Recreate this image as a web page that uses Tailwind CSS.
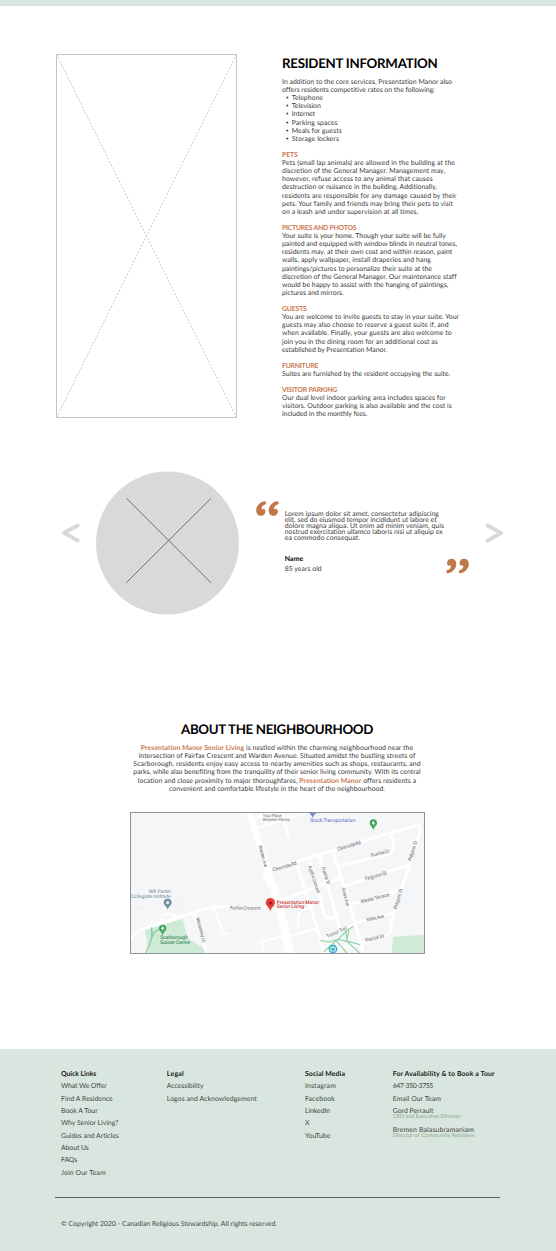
<!DOCTYPE html>
<html lang="en">
<head>
<meta charset="utf-8">
<title>Presentation Manor</title>
<script src="https://cdn.jsdelivr.net/npm/@tailwindcss/browser@4"></script>
</head>
<body class="bg-white font-[Lato,'Open_Sans',sans-serif] text-[#3c3c3c] [text-rendering:geometricPrecision]">
<div class="flex h-[1251px] w-[556px] flex-col overflow-hidden">
  <div class="h-1.5 shrink-0 bg-[#d9e6df]"></div>

  <section class="flex h-[412px] shrink-0 pl-14 pt-12">
    <svg class="h-[364px] w-[181px] shrink-0" viewBox="0 0 181 364" fill="none">
      <path d="M.5 .5 180.5 363.5M180.5 .5 .5 363.5" stroke="#b9bcbf" stroke-width=".8" stroke-dasharray="2 1.6"/>
      <rect x=".5" y=".5" width="180" height="363" stroke="#c2c5c9"/>
    </svg>
    <div class="ml-[45px] text-[6.9px] leading-[8.11px]">
      <h1 class="mb-[7px] mt-px text-[13.3px] font-bold leading-4 text-black"><span data-w="155.5">RESIDENT INFORMATION</span></h1>
      <p><span data-w="170">In addition to the core services, Presentation Manor also</span><br><span data-w="153">offers residents competitive rates on the following:</span></p>
      <ul>
        <li class="flex"><span class="w-[9.7px] pl-[3.7px] text-[5px]">•</span><span data-w="31.3">Telephone</span></li>
        <li class="flex"><span class="w-[9.7px] pl-[3.7px] text-[5px]">•</span><span data-w="29">Television</span></li>
        <li class="flex"><span class="w-[9.7px] pl-[3.7px] text-[5px]">•</span><span data-w="23.3">Internet</span></li>
        <li class="flex"><span class="w-[9.7px] pl-[3.7px] text-[5px]">•</span><span data-w="46">Parking spaces</span></li>
        <li class="flex"><span class="w-[9.7px] pl-[3.7px] text-[5px]">•</span><span data-w="50">Meals for guests</span></li>
        <li class="flex"><span class="w-[9.7px] pl-[3.7px] text-[5px]">•</span><span data-w="47.3">Storage lockers</span></li>
      </ul>
      <h2 class="mt-[8.11px] font-bold text-[#c87850]"><span data-w="15.7">PETS</span></h2>
      <p><span data-w="173">Pets (small lap animals) are allowed in the building at the</span><br><span data-w="163">discretion of the General Manager. Management may,</span><br><span data-w="150.7">however, refuse access to any animal that causes</span><br><span data-w="154.7">destruction or nuisance in the building. Additionally,</span><br><span data-w="174.7">residents are responsible for any damage caused by their</span><br><span data-w="171">pets. Your family and friends may bring their pets to visit</span><br><span data-w="136.3">on a leash and under supervision at all times.</span></p>
      <h2 class="mt-[8.11px] font-bold text-[#c87850]"><span data-w="74.3">PICTURES AND PHOTOS</span></h2>
      <p><span data-w="163.7">Your suite is your home. Though your suite will be fully</span><br><span data-w="175">painted and equipped with window blinds in neutral tones,</span><br><span data-w="170.3">residents may, at their own cost and within reason, paint</span><br><span data-w="149">walls, apply wallpaper, install draperies and hang</span><br><span data-w="150">paintings/pictures to personalize their suite at the</span><br><span data-w="174.7">discretion of the General Manager. Our maintenance staff</span><br><span data-w="166.3">would be happy to assist with the hanging of paintings,</span><br><span data-w="61.7">pictures and mirrors.</span></p>
      <h2 class="mt-[8.11px] font-bold text-[#c87850]"><span data-w="24.7">GUESTS</span></h2>
      <p><span data-w="177">You are welcome to invite guests to stay in your suite. Your</span><br><span data-w="166.7">guests may also choose to reserve a guest suite if, and</span><br><span data-w="169.7">when available. Finally, your guests are also welcome to</span><br><span data-w="155.7">join you in the dining room for an additional cost as</span><br><span data-w="105.3">established by Presentation Manor.</span></p>
      <h2 class="mt-[8.11px] font-bold text-[#c87850]"><span data-w="36.3">FURNITURE</span></h2>
      <p><span data-w="168.3">Suites are furnished by the resident occupying the suite.</span></p>
      <h2 class="mt-[8.11px] font-bold text-[#c87850]"><span data-w="55">VISITOR PARKING</span></h2>
      <p><span data-w="163.7">Our dual level indoor parking area includes spaces for</span><br><span data-w="169.7">visitors. Outdoor parking is also available and the cost is</span><br><span data-w="85.3">included in the monthly fees.</span></p>
    </div>
  </section>

  <section class="mt-[53px] flex h-[144px] shrink-0 items-start pl-[61px]">
    <svg class="mt-[51px] h-[22px] w-5 shrink-0" viewBox="0 0 20 22" fill="none" stroke="#d9d9d9" stroke-width="3.8" stroke-linecap="round" stroke-linejoin="round"><path d="M16.8 3.5 3 10.8 16.8 18.5"/></svg>
    <svg class="ml-[15px] h-[144px] w-[143px] shrink-0" viewBox="0 0 143 144" fill="none"><circle cx="71.5" cy="72" r="71.5" fill="#d9d9d9"/><path d="M30.5 27.3 115 111.7M115 27.3 30.3 111.7" stroke="#555" stroke-width=".8"/></svg>
    <svg class="ml-[17px] mt-[30px] h-[16px] w-[23px] shrink-0" viewBox="0 0 23 16" fill="#c27748"><path id="q" d="M9.2 .4C5.800 0 .2 3.900 .2 9.500 .2 12.900 2.300 14.800 5 14.800 7.700 14.800 9.400 13 9.400 10.600 9.400 9.100 8.900 8.200 7.900 7.700 7.500 8.100 6.700 8.400 5.900 8.200 5.200 6.300 6.500 4.200 9.200 3.500 10.400 3.100 10.400 .7 9.200 .4Z"/><use href="#q" x="12.5"/></svg>
    <div class="ml-[5.7px] mt-[39.5px] w-[161px] shrink-0 text-[6.9px] leading-[6.2px]">
      <p><span data-w="154.3">Lorem ipsum dolor sit amet, consectetur adipiscing</span><br><span data-w="152">elit, sed do eiusmod tempor incididunt ut labore et</span><br><span data-w="159.3">dolore magna aliqua. Ut enim ad minim veniam, quis</span><br><span data-w="158">nostrud exercitation ullamco laboris nisi ut aliquip ex</span><br><span data-w="75.3">ea commodo consequat.</span></p>
      <p class="mt-[12.3px] leading-[10.3px]"><b class="text-black"><span data-w="18.7">Name</span></b><br><span data-w="37">85 years old</span></p>
    </div>
    <svg class="mt-[87px] h-[16px] w-[23px] shrink-0" viewBox="0 0 23 16" fill="#c27748"><g transform="rotate(180 11.5 7.8)"><use href="#q"/><use href="#q" x="12.5"/></g></svg>
    <svg class="ml-[15px] mt-[51px] h-[22px] w-5 shrink-0" viewBox="0 0 20 22" fill="none" stroke="#d9d9d9" stroke-width="3.8" stroke-linecap="round" stroke-linejoin="round"><path d="M3.5 3.5 17.2 11 3.5 18.7"/></svg>
  </section>

  <section class="mt-[106px] flex shrink-0 flex-col items-center pr-[2px] text-center text-[6.9px] leading-[8.1px]">
    <h1 class="mb-[7.2px] text-[13.3px] font-bold leading-4 text-black"><span data-w="192">ABOUT THE NEIGHBOURHOOD</span></h1>
    <p><span data-w="272.3"><b class="text-[#c87850]">Presentation Manor Senior Living</b> is nestled within the charming neighbourhood near the</span><br><span data-w="276.7">intersection of Fairfax Crescent and Warden Avenue. Situated amidst the bustling streets of</span><br><span data-w="287.3">Scarborough, residents enjoy easy access to nearby amenities such as shops, restaurants, and</span><br><span data-w="287.3">parks, while also benefiting from the tranquility of their senior living community. With its central</span><br><span data-w="278.3">location and close proximity to major thoroughfares, <b class="text-[#c87850]">Presentation Manor</b> offers residents a</span><br><span data-w="216">convenient and comfortable lifestyle in the heart of the neighbourhood.</span></p>
  </section>

  <svg class="ml-[130px] mt-[19.2px] h-[142px] w-[295px] shrink-0" viewBox="15 20 885 426" fill="none" font-family="Roboto, sans-serif" font-size="15">
    <rect x="15" y="20" width="885" height="426" fill="#f5f6f8"/>
    <path d="M60 374 172 341 190 400 240 431V446H72Z" fill="#d0ead8"/>
    <path d="M804 394 900 388V446H800Z" fill="#d0ead8"/>
    <g stroke="#fff" stroke-linecap="round" stroke-linejoin="round">
      <path d="M370 10 402 110 443 240 466 320 500 450" stroke-width="19"/>
      <path d="M425 210 446 245 476 360 494 440" stroke-width="26"/>
      <path d="M10 420Q22 385 48 372L150 340 232 313Q280 300 330 305L405 310 436 297 560 250 640 220" stroke-width="9"/>
      <path d="M433 196 520 167 880 58Q888 62 882 88L840 220 806 322 795 380Q790 392 770 396L580 446" stroke-width="9"/>
      <path d="M513 168 588 405 598 450M552 158 600 335 618 339 637 333M582 150 645 370M624 139 690 350 714 440M643 182 790 147Q808 140 806 112L800 92M658 242 850 180M674 298 822 255M690 354 808 322M588 408 690 354M712 412 760 399" stroke-width="9"/>
      <path d="M396 68 600 5M472 20 491 97M385 38 470 12M410 25 423 58" stroke-width="7"/>
      <path d="M208 326 220 370 237 414 243 446M270 314 290 375Q296 390 310 384M400 412 465 394M410 414 420 446M108 345Q108 324 132 325 154 327 156 338M520 365 519 330Q528 314 560 305M470 399 570 370" stroke-width="6"/>
    </g>
    <path d="M15 312 60 304M145 289 172 278M152 305 178 294M850 150 890 162M398 50 404 60 420 53" stroke="#e9ebee" stroke-width="2"/>
    <path d="M110 366 86 382 73 419 61 446M80 398V366" stroke="#8acb9d" stroke-width="4"/>
    <path d="M586 405 612 410 640 402 680 411 706 418M596 440 635 405 668 374 685 363M662 376 667 409 706 445M633 405 668 446M672 371 665 410" stroke="#92d4a6" stroke-width="3.5"/>
    <g fill="#66686b" stroke="#f8f9fa" stroke-width="2" paint-order="stroke">
      <g text-anchor="middle">
        <text transform="translate(409 154) rotate(75)" textLength="67" lengthAdjust="spacingAndGlyphs">Warden Ave</text>
        <text transform="translate(361 313) rotate(1)" textLength="92">Fairfax Crescent</text>
        <text transform="translate(223 375) rotate(75)" textLength="77" lengthAdjust="spacingAndGlyphs">Monastery Ln</text>
        <text transform="translate(480 188) rotate(-16)" textLength="75">Cleanside Rd</text>
        <text transform="translate(673 126) rotate(-16)" textLength="73">Cleanside Rd</text>
        <text transform="translate(767 148) rotate(-14)" textLength="57">Fuarfax Dr</text>
        <text transform="translate(754 216) rotate(-15)" textLength="67">Ferguson St</text>
        <text transform="translate(751 283) rotate(-14)" textLength="88">Wexler Terrace</text>
        <text transform="translate(751 343) rotate(-12)" textLength="56">Yates Ave</text>
        <text transform="translate(750 403) rotate(-14)" textLength="57">Patrick St</text>
        <text transform="translate(637 385) rotate(-25)" textLength="66">Trainor Trail</text>
        <text transform="translate(563 224) rotate(72)" textLength="85" lengthAdjust="spacingAndGlyphs">Agatha Crescent</text>
        <text transform="translate(598 212) rotate(72)" textLength="54" lengthAdjust="spacingAndGlyphs">Dunlop St</text>
        <text transform="translate(657 275) rotate(76)" textLength="57" lengthAdjust="spacingAndGlyphs">Alvara Ave</text>
        <text transform="translate(868 138) rotate(-72)" textLength="62" lengthAdjust="spacingAndGlyphs">Pidgeon St</text>
        <text transform="translate(824 282) rotate(-73)" textLength="62" lengthAdjust="spacingAndGlyphs">Pidgeon St</text>
      </g>
      <text x="413" y="34" font-size="13" textLength="57" lengthAdjust="spacingAndGlyphs">Your Place</text>
      <text x="413" y="46" font-size="13" textLength="81" lengthAdjust="spacingAndGlyphs">Between Places</text>
      <g fill="#607d8b"><text x="71" y="264" textLength="67">WA Porter</text><text x="17" y="277" textLength="120">Collegiate Institute</text></g>
      <g fill="#2f8350" font-size="16" stroke="none"><text x="105" y="402" textLength="84">Scarborough</text><text x="105" y="416" textLength="90">Soccer Centre</text></g>
      <text x="555" y="51" fill="#5468c8" font-size="16" textLength="136">Stock Transportation</text>
      <g fill="#c92f2f" font-size="15" font-weight="500"><text x="455" y="296" textLength="128">Presentation Manor</text><text x="455" y="309" textLength="82">Senior Living</text></g>
    </g>
    <g id="pin" fill="#3fa65a"><path d="M745 74C742 63 734 61 734 53A11 11 0 0 1 756 53C756 61 748 63 745 74Z"/><path d="M745 46 740 55H744V60H746V55H750Z" fill="#fff"/></g>
    <use href="#pin" x="-632" y="316"/>
    <path d="M128 313C125 301 116 299 116 292A12 12 0 0 1 140 292C140 299 131 301 128 313Z" fill="#718c9b"/><circle cx="128" cy="292" r="5" fill="#e2e9ed"/>
    <path d="M436 318C433 304 422 302 422 292A14 14 0 0 1 450 292C450 302 439 304 436 318Z" fill="#e5403a"/><circle cx="436" cy="293" r="5.5" fill="#a51f24"/>
    <path d="M553 20H574Q573 27 567 30L563 37 559 30Q554 27 553 20Z" fill="#7788d8"/>
    <circle cx="624" cy="431" r="13" fill="#2eafcb"/><path d="M617 427H631V437H617ZM620 427Q624 418 628 427" stroke="#fff" stroke-width="2.5"/>
    <rect x="16.5" y="21.5" width="882" height="423" stroke="#909294" stroke-width="3"/>
  </svg>

  <footer class="mt-[95px] flex grow flex-col bg-[#d9e6df] pt-[19px] text-[6.9px] leading-[12.35px] text-[#3f4743]">
    <div class="grid h-[129.3px] grid-cols-[105.8px_138.2px_87.7px_110px] pl-[61px]">
      <ul>
        <li class="font-bold text-[#151716]"><span data-w="35.3">Quick Links</span></li>
        <li><span data-w="45.7">What We Offer</span></li>
        <li><span data-w="51.7">Find A Residence</span></li>
        <li><span data-w="36.7">Book A Tour</span></li>
        <li><span data-w="57.3">Why Senior Living?</span></li>
        <li><span data-w="57.7">Guides and Articles</span></li>
        <li><span data-w="27.7">About Us</span></li>
        <li><span data-w="16">FAQs</span></li>
        <li><span data-w="44.7">Join Our Team</span></li>
      </ul>
      <ul>
        <li class="font-bold text-[#151716]"><span data-w="17.3">Legal</span></li>
        <li><span data-w="36.7">Accessibility</span></li>
        <li><span data-w="90">Logos and Acknowledgement</span></li>
      </ul>
      <ul>
        <li class="font-bold text-[#151716]"><span data-w="40">Social Media</span></li>
        <li><span data-w="31">Instagram</span></li>
        <li><span data-w="30">Facebook</span></li>
        <li><span data-w="25">LinkedIn</span></li>
        <li>X</li>
        <li><span data-w="25.3">YouTube</span></li>
      </ul>
      <ul>
        <li class="font-bold text-[#151716]"><span data-w="102">For Availability &amp; to Book a Tour</span></li>
        <li><span data-w="40.3">647-350-3755</span></li>
        <li><span data-w="48.3">Email Our Team</span></li>
        <li class="pt-[3px] leading-[6.3px]"><span data-w="40.7">Gord Perrault</span><br><span class="text-[5.7px] text-[#8eaa8b]" data-w="68">CEO and Executive Director</span></li>
        <li class="pt-[6px] leading-[6.3px]"><span data-w="81.5">Bremen Balasubramaniam</span><br><span class="text-[5.7px] text-[#8eaa8b]" data-w="81.5">Director of Community Relations</span></li>
      </ul>
    </div>
    <div class="ml-[55px] w-[445px] border-t border-[#56625d]"></div>
    <p class="pl-[61px] pt-[19.3px]"><span data-w="216">© Copyright 2020 - Canadian Religious Stewardship. All rights reserved.</span></p>
  </footer>
</div>
<script>
  // Track each line out to its set measure.
  function fitLines() {
    document.querySelectorAll('[data-w]').forEach(function (line) {
      line.style.display = 'inline-block';
      line.style.whiteSpace = 'nowrap';
      line.style.verticalAlign = 'top';
      line.style.fontVariantLigatures = 'none';
      line.style.letterSpacing = '0px';
      var range = document.createRange();
      range.selectNodeContents(line);
      var target = parseFloat(line.dataset.w);
      var gap = (target - range.getBoundingClientRect().width) / line.textContent.length;
      line.style.letterSpacing = gap.toFixed(4) + 'px';
    });
  }
  fitLines();
  window.addEventListener('load', fitLines);
  document.fonts.ready.then(fitLines);
  new ResizeObserver(fitLines).observe(document.querySelector('section'));
</script>
</body>
</html>
